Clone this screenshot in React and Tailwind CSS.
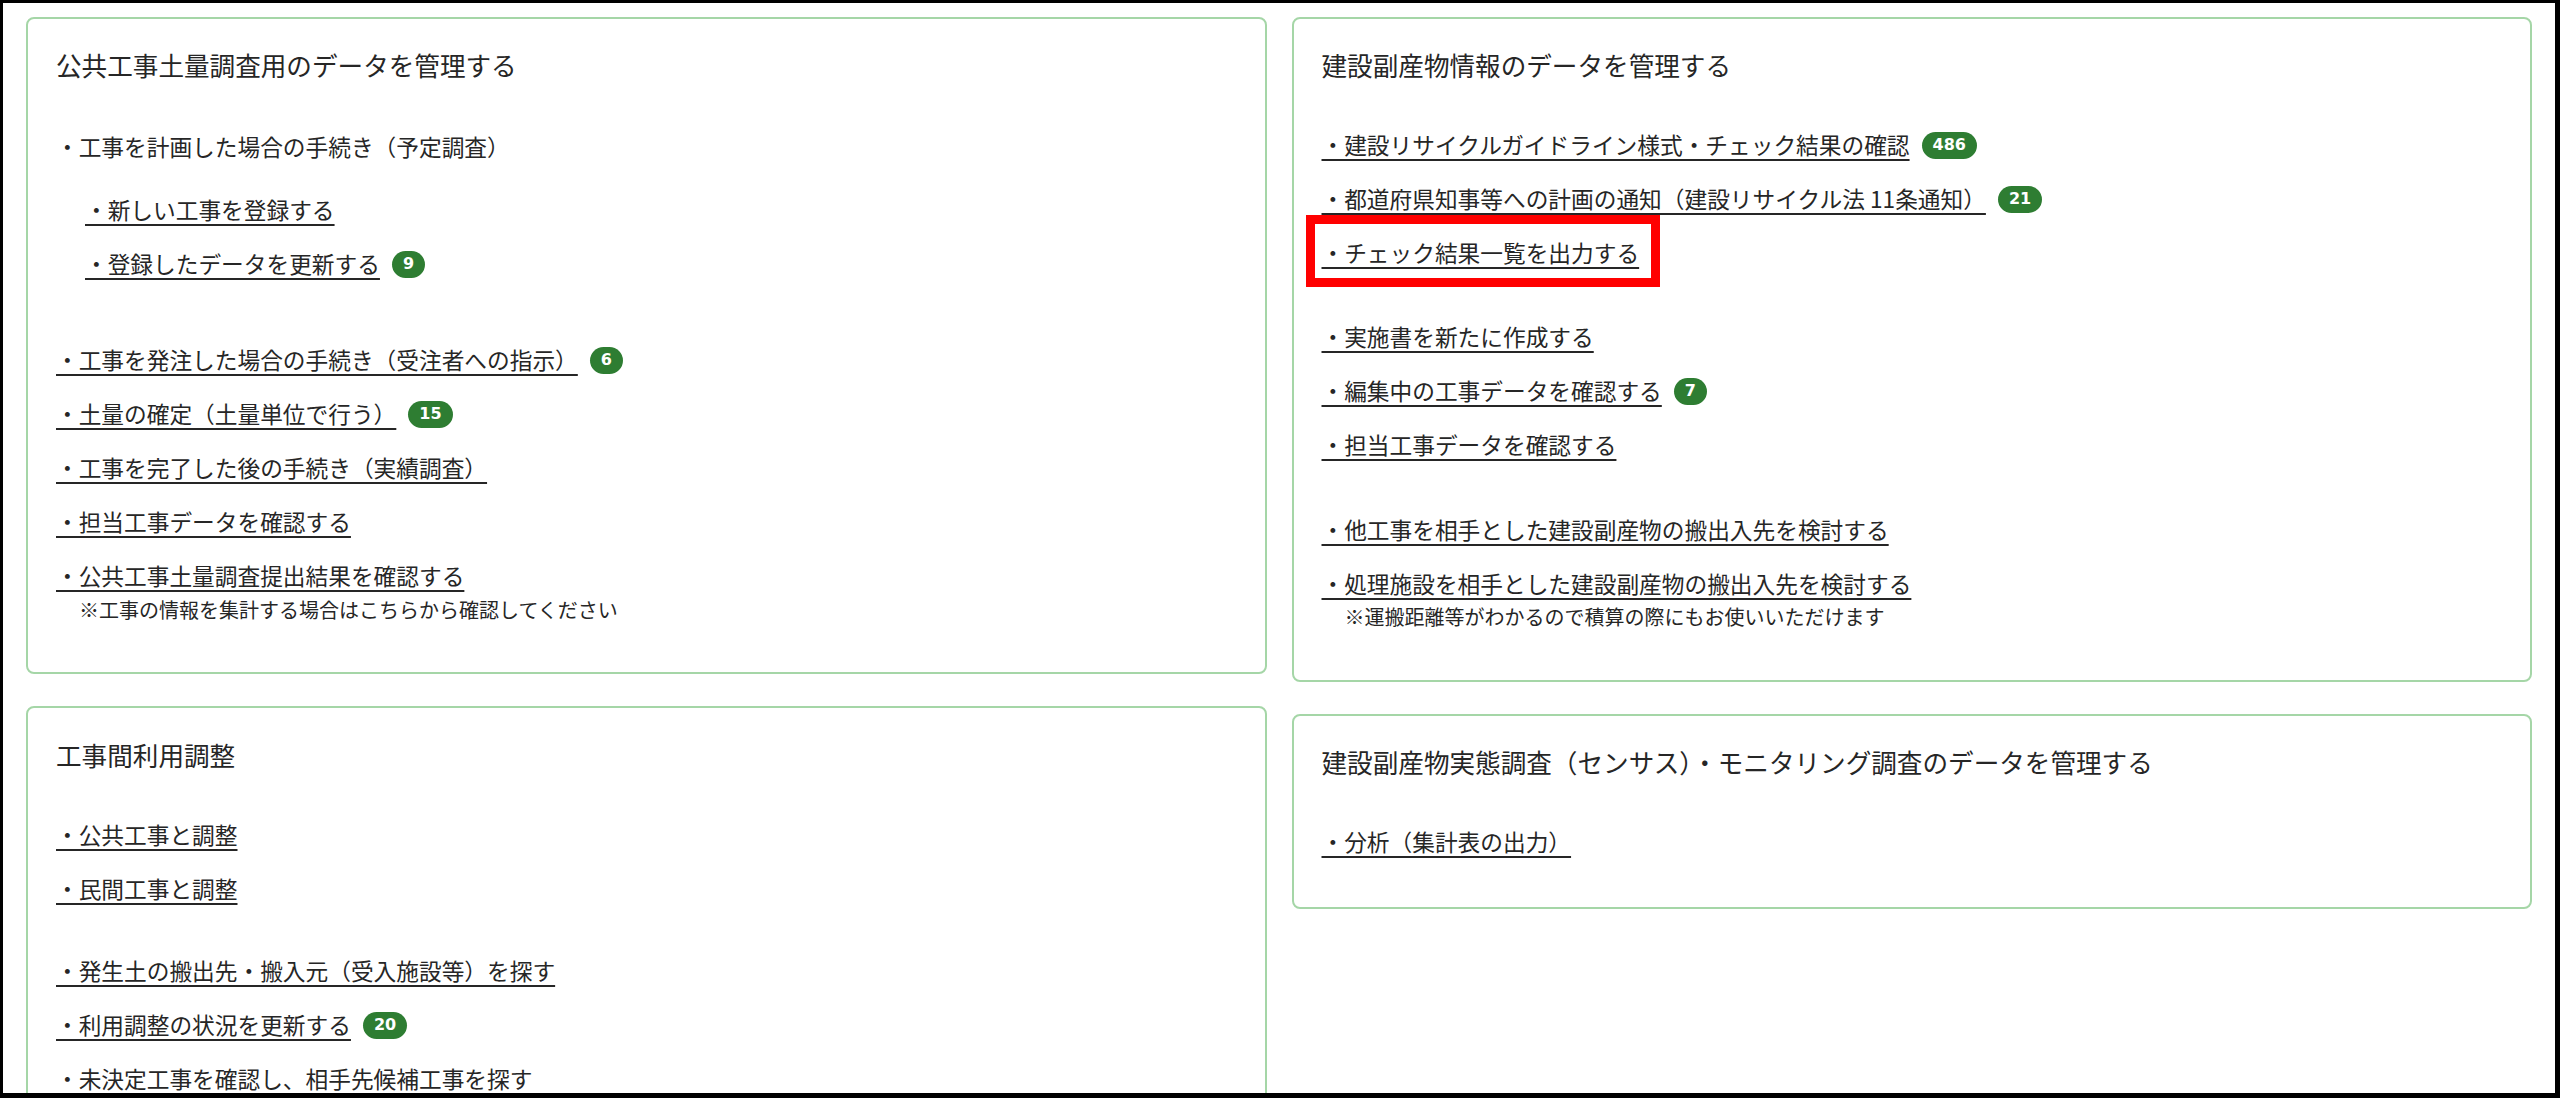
const jp = "font-['Noto_Sans_CJK_JP',sans-serif]";

function Badge({ n }) {
  return (
    <span className="ml-3 inline-flex h-[27px] items-center rounded-full bg-[#2e7d32] px-[11px] font-['DejaVu_Sans',sans-serif] text-[16px] font-bold leading-none text-white">
      {n}
    </span>
  );
}

// one link row (54px pitch)
function Row({ text, badge, link = true, boxed = false }) {
  return (
    <div className="flex h-[54px] items-center">
      <span className={`relative leading-[32px] ${link ? 'underline decoration-2 underline-offset-[5px]' : ''}`}>
        {text}
        {boxed && (
          <span className="pointer-events-none absolute -bottom-[18px] -left-[16px] -right-[21px] -top-[22px] border-[9px] border-[#ff0000]" />
        )}
      </span>
      {badge && <Badge n={badge} />}
    </div>
  );
}

function Note({ children, className = '' }) {
  return <div className={`pl-[23px] text-[20px] leading-[26px] ${className}`}>{children}</div>;
}

function Card({ title, className = '', children }) {
  return (
    <div className={`rounded-lg border-2 border-[#a5d6a7] px-[28px] ${className}`}>
      <div className="flex h-[54px] items-center text-[25.6px]">{title}</div>
      <div className="text-[22.7px]">{children}</div>
    </div>
  );
}

export default function App() {
  return (
    <div className={`box-border h-[1098px] w-[2560px] overflow-hidden border-b-[5px] border-l-[3px] border-r-[5px] border-t-[3px] border-black bg-white text-[#262626] ${jp}`}>
      <div className="grid grid-cols-2 gap-[25px] px-[23px] pt-[14px]">
        {/* left column */}
        <div className="flex flex-col gap-8">
          <Card title="公共工事土量調査用のデータを管理する" className="pb-[49px] pt-[19px]">
            <div className="mt-[28px]">
              <Row text="・工事を計画した場合の手続き（予定調査）" link={false} />
            </div>
            <div className="mt-[9px] pl-[29px]">
              <Row text="・新しい工事を登録する" />
              <Row text="・登録したデータを更新する" badge="9" />
            </div>
            <div className="mt-[42px]">
              <Row text="・工事を発注した場合の手続き（受注者への指示）" badge="6" />
              <Row text="・土量の確定（土量単位で行う）" badge="15" />
              <Row text="・工事を完了した後の手続き（実績調査）" />
              <Row text="・担当工事データを確認する" />
              <Row text="・公共工事土量調査提出結果を確認する" />
            </div>
            <Note className="-mt-[6px]">※工事の情報を集計する場合はこちらから確認してください</Note>
          </Card>

          <Card title="工事間利用調整" className="pb-[60px] pt-[20px]">
            <div className="mt-[26px]">
              <Row text="・公共工事と調整" />
              <Row text="・民間工事と調整" />
            </div>
            <div className="mt-[28px]">
              <Row text="・発生土の搬出先・搬入元（受入施設等）を探す" />
              <Row text="・利用調整の状況を更新する" badge="20" />
              <Row text="・未決定工事を確認し、相手先候補工事を探す" />
            </div>
          </Card>
        </div>

        {/* right column */}
        <div className="flex flex-col gap-8">
          <Card title="建設副産物情報のデータを管理する" className="pb-[50px] pt-[19px]">
            <div className="mt-[26px]">
              <Row text="・建設リサイクルガイドライン様式・チェック結果の確認" badge="486" />
              <Row text="・都道府県知事等への計画の通知（建設リサイクル法 11条通知）" badge="21" />
              <Row text="・チェック結果一覧を出力する" boxed />
            </div>
            <div className="mt-[30px]">
              <Row text="・実施書を新たに作成する" />
              <Row text="・編集中の工事データを確認する" badge="7" />
              <Row text="・担当工事データを確認する" />
            </div>
            <div className="mt-[31px]">
              <Row text="・他工事を相手とした建設副産物の搬出入先を検討する" />
              <Row text="・処理施設を相手とした建設副産物の搬出入先を検討する" />
            </div>
            <Note className="-mt-[7px]">※運搬距離等がわかるので積算の際にもお使いいただけます</Note>
          </Card>

          <Card title="建設副産物実態調査（センサス）・モニタリング調査のデータを管理する" className="pb-[38px] pt-[19px]">
            <div className="mt-[26px]">
              <Row text="・分析（集計表の出力）" />
            </div>
          </Card>
        </div>
      </div>
    </div>
  );
}
